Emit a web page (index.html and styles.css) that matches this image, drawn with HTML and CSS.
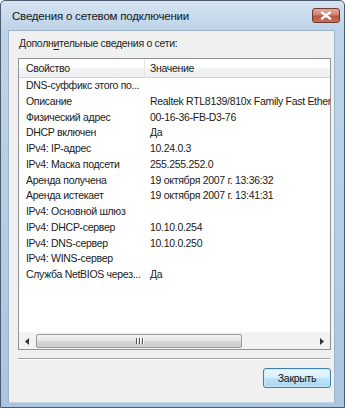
FILE: index.html
```html
<!DOCTYPE html>
<html lang="ru">
<head>
<meta charset="utf-8">
<title>Сведения о сетевом подключении</title>
<link rel="stylesheet" href="styles.css">
</head>
<body>
<div class="window">
  <div class="titlebar">
    <span class="title">Сведения о сетевом подключении</span>
    <div class="close">
      <svg width="14" height="9" viewBox="0 0 14 9"><path d="M3 1.5 L11 7.5 M11 1.5 L3 7.5" stroke="#fff" stroke-width="2.4" stroke-linecap="round"/></svg>
    </div>
  </div>
  <div class="client">
    <div class="label">Дополн<u>и</u>тельные сведения о сети:</div>
    <div class="listbox">
      <div class="header">
        <div class="hcell c1">Свойство</div>
        <div class="hcell c2">Значение</div>
      </div>
      <div class="rows">
        <div class="row"><span class="k">DNS-суффикс этого по...</span><span class="v"></span></div>
        <div class="row"><span class="k">Описание</span><span class="v">Realtek RTL8139/810x Family Fast Ethernet NIC</span></div>
        <div class="row"><span class="k">Физический адрес</span><span class="v">00-16-36-FB-D3-76</span></div>
        <div class="row"><span class="k">DHCP включен</span><span class="v">Да</span></div>
        <div class="row"><span class="k">IPv4: IP-адрес</span><span class="v">10.24.0.3</span></div>
        <div class="row"><span class="k">IPv4: Маска подсети</span><span class="v">255.255.252.0</span></div>
        <div class="row"><span class="k">Аренда получена</span><span class="v">19 октября 2007 г. 13:36:32</span></div>
        <div class="row"><span class="k">Аренда истекает</span><span class="v">19 октября 2007 г. 13:41:31</span></div>
        <div class="row"><span class="k">IPv4: Основной шлюз</span><span class="v"></span></div>
        <div class="row"><span class="k">IPv4: DHCP-сервер</span><span class="v">10.10.0.254</span></div>
        <div class="row"><span class="k">IPv4: DNS-сервер</span><span class="v">10.10.0.250</span></div>
        <div class="row"><span class="k">IPv4: WINS-сервер</span><span class="v"></span></div>
        <div class="row"><span class="k">Служба NetBIOS через...</span><span class="v">Да</span></div>
      </div>
      <div class="hscroll">
        <div class="sbtn"><svg width="5" height="7" viewBox="0 0 5 7"><path d="M4 0 L0 3.5 L4 7 Z" fill="#333"/></svg></div>
        <div class="track">
          <div class="thumb"><span class="grip"></span><span class="grip"></span><span class="grip"></span></div>
        </div>
        <div class="sbtn"><svg width="5" height="7" viewBox="0 0 5 7"><path d="M1 0 L5 3.5 L1 7 Z" fill="#333"/></svg></div>
      </div>
    </div>
    <div class="sep"></div>
    <div class="buttons">
      <button class="btn">Закрыть</button>
    </div>
  </div>
</div>
</body>
</html>
```
FILE: styles.css
```css
html, body {
  margin: 0;
  padding: 0;
  background: #ffffff;
}
body {
  font-family: "Liberation Sans", Arial, sans-serif;
  font-size: 10.5px;
  letter-spacing: -0.3px;
  color: #1a1a1a;
}
.window {
  box-sizing: border-box;
  width: 345px;
  height: 408px;
  border: 1px solid #4c5c6e;
  border-radius: 5px 5px 0 0;
  background: linear-gradient(to bottom, #d5e3f1 0px, #bdd3e9 30px, #b4cde6 60%, #a9c5e1 100%);
  padding: 0 9px 4px 7px;
  display: flex;
  flex-direction: column;
}
.titlebar {
  height: 29px;
  display: flex;
  align-items: flex-start;
  justify-content: space-between;
}
.title {
  font-size: 11.5px;
  letter-spacing: -0.2px;
  color: #101820;
  margin-top: 9px;
  margin-left: 4px;
}
.close {
  width: 28px;
  height: 15px;
  margin-top: 7px;
  margin-right: -5px;
  box-sizing: border-box;
  border: 1px solid #6d3a32;
  border-radius: 3px;
  background: linear-gradient(to bottom, #e3a89c 0%, #d0806f 45%, #b85540 55%, #c8705c 100%);
  display: flex;
  align-items: center;
  justify-content: center;
}
.close svg { display: block; }
.client {
  flex: 1;
  background: #f0f0f0;
  border: 1px solid #9fb4c9;
  border-bottom-color: #c4d4e4;
  box-sizing: border-box;
  padding: 5px 3px 0 9px;
  display: flex;
  flex-direction: column;
}
.label {
  margin-left: 1px;
  height: 14px;
  line-height: 14px;
  color: #1e1e1e;
}
.label u { text-decoration-thickness: 1px; text-underline-offset: 2px; }
.listbox {
  margin-top: 8px;
  height: 292px;
  box-sizing: border-box;
  border: 1px solid #8e9399;
  background: #ffffff;
  display: flex;
  flex-direction: column;
  overflow: hidden;
}
.header {
  height: 18px;
  flex: none;
  display: flex;
  background: linear-gradient(to bottom, #ffffff 0%, #ffffff 50%, #f3f4f6 51%, #eef0f3 100%);
  border-bottom: 1px solid #d5d5d5;
}
.hcell {
  line-height: 18px;
  padding-left: 7px;
  box-sizing: border-box;
  color: #202020;
}
.hcell.c1 { width: 126px; border-right: 1px solid #e3e4e6; }
.hcell.c2 { flex: 1; padding-left: 5px; }
.rows {
  flex: 1;
  padding-top: 0;
}
.row {
  display: flex;
  height: 15.75px;
  line-height: 15.75px;
  white-space: nowrap;
}
.row .k { width: 126px; padding-left: 7px; box-sizing: border-box; flex: none; overflow: hidden; }
.row .v { padding-left: 5px; flex: none; }
.hscroll {
  height: 16px;
  flex: none;
  display: flex;
  align-items: stretch;
  background: #f2f2f2;
  border-top: 1px solid #f6f6f6;
}
.sbtn {
  width: 17px;
  flex: none;
  display: flex;
  align-items: center;
  justify-content: center;
}
.sbtn svg { display: block; }
.track {
  flex: 1;
  display: flex;
  align-items: stretch;
  padding: 1px 0;
}
.thumb {
  width: 206px;
  box-sizing: border-box;
  border: 1px solid #9a9a9a;
  border-radius: 2px;
  background: linear-gradient(to bottom, #f3f3f3 0%, #e7e7e7 50%, #d6d6d6 51%, #cfcfcf 100%);
  display: flex;
  align-items: center;
  justify-content: center;
  gap: 2px;
}
.grip {
  width: 1px;
  height: 6px;
  background: #555;
  box-shadow: 1px 0 0 #fff;
}
.sep {
  margin-top: 8px;
  margin-left: 0;
  margin-right: 1px;
  height: 1px;
  background: #a0a0a0;
  border-bottom: 1px solid #ffffff;
}
.buttons {
  display: flex;
  justify-content: flex-end;
  margin-top: 8px;
}
.btn {
  width: 68px;
  height: 20px;
  box-sizing: border-box;
  border: 1px solid #3c7fb1;
  border-radius: 3px;
  background: linear-gradient(to bottom, #e9f5fc 0%, #d9effb 50%, #bfe3f8 51%, #a8d7f3 100%);
  box-shadow: inset 0 0 0 1px #c9ecfc;
  font-family: "Liberation Sans", Arial, sans-serif;
  font-size: 10.5px;
  letter-spacing: -0.3px;
  color: #101010;
  padding: 0;
  line-height: 18px;
}
```
